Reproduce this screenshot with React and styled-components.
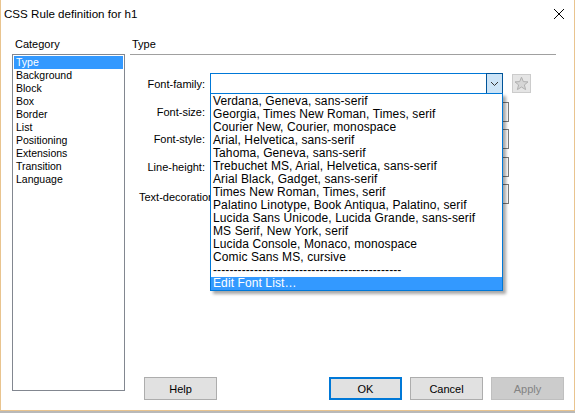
import React from "react";
import styled, { createGlobalStyle } from "styled-components";

const Global = createGlobalStyle`
  html, body { margin: 0; padding: 0; }
  body {
    width: 575px; height: 413px; overflow: hidden;
    background: #b9b9b9;
    font-family: "Liberation Sans", Arial, sans-serif;
    font-size: 11px; color: #000;
  }
`;

const Window = styled.div`
  box-sizing: border-box;
  width: 575px; height: 411px;
  background: #fff;
  border: 1px solid #e9c48f;
  border-top: none;
  display: flex; flex-direction: column;
`;

const TitleBar = styled.div`
  height: 30px; flex: none;
  display: flex; align-items: flex-start; justify-content: space-between;
  padding: 6px 9px 0 3px;
  box-sizing: border-box;
`;

const Title = styled.div`
  font-size: 11.6px; line-height: 15px;
`;

const Close = styled.div`
  width: 12px; height: 12px; margin-top: 2px;
  display: flex;
`;

const Content = styled.div`
  flex: 1; min-height: 0;
  display: grid; grid-template-columns: 113px 1fr; column-gap: 5px;
  padding: 0 10px 10px 11px;
`;

const Column = styled.div`
  display: flex; flex-direction: column; min-height: 0;
`;

const Heading = styled.div`
  line-height: 13px; margin-top: 8px; padding-left: ${p => p.$indent}px;
`;

const ListBox = styled.div`
  margin-top: 3px; height: 337px; box-sizing: border-box;
  border: 1px solid #828790;
  padding: 1px;
`;

const ListItem = styled.div`
  height: 13px; line-height: 13px; padding-left: 2px;
  font-size: 10.5px;
  background: ${p => (p.$selected ? "#3399ff" : "transparent")};
  color: ${p => (p.$selected ? "#fff" : "#000")};
`;

const Separator = styled.div`
  margin-top: 3px; height: 1px; background: #a0a0a0; width: 426px;
`;

const Form = styled.div`
  margin-top: 18px;
  display: flex; flex-direction: column;
`;

const Row = styled.div`
  display: grid; grid-template-columns: 80px 299px;
  align-items: center;
  margin-top: ${p => p.$top}px;
  height: ${p => p.$h}px;
`;

const Label = styled.div`
  text-align: ${p => (p.$left ? "left" : "right")};
  padding-right: 5px; padding-left: ${p => (p.$left ? 9 : 0)}px;
  white-space: nowrap; line-height: 13px;
  position: relative; top: ${p => p.$shift || 0}px;
`;

const Controls = styled.div`
  display: flex; align-items: center; gap: 9px;
  position: relative;
`;

const Combo = styled.div`
  position: relative; flex: none;
  width: 293px; height: 21px; box-sizing: border-box;
  border: 1px solid #0078d7;
  display: flex;
`;

const ComboField = styled.div` flex: 1; `;

const ComboButton = styled.div`
  width: 17px; margin: -1px -1px -1px 0;
  box-sizing: border-box;
  background: #cce4f7; border: 1px solid #005499;
  display: flex; align-items: center; justify-content: center;
`;

const StarButton = styled.div`
  flex: none;
  width: 19px; height: 19px; box-sizing: border-box;
  background: #e5e5e5; border: 1px solid #cccccc;
  display: flex; align-items: center; justify-content: center;
  margin-top: -1px;
`;

const SelectBox = styled.div`
  width: 299px; height: 20px; box-sizing: border-box;
  border: 1px solid #7a7a7a; background: #fff;
`;

const Dropdown = styled.div`
  position: absolute; left: -1px; top: 19px;
  width: 293px; box-sizing: border-box;
  border: 1px solid #0078d7; background: #fff;
  padding-top: 1px;
  box-shadow: 3px 3px 3px rgba(0,0,0,0.35);
  z-index: 5;
`;

const Option = styled.div`
  height: 13px; line-height: 13px;
  padding-left: 2px;
  font-size: 12px; letter-spacing: 0.1px;
  background: ${p => (p.$highlight ? "#3399ff" : "transparent")};
  color: ${p => (p.$highlight ? "#fff" : "#000")};
  white-space: nowrap; overflow: hidden;
`;

const Buttons = styled.div`
  margin-top: auto;
  display: flex; gap: 8px; padding-left: 14px;
`;

const Spacer = styled.div` flex: 1; `;

const Button = styled.div`
  width: 73px; height: 23px; box-sizing: border-box;
  display: flex; align-items: center; justify-content: center;
  background: ${p => (p.$disabled ? "#cccccc" : "#e1e1e1")};
  color: ${p => (p.$disabled ? "#838383" : "#000")};
  border: ${p => (p.$default ? "2px solid #0078d7" : p.$disabled ? "1px solid #bfbfbf" : "1px solid #adadad")};
  font-size: 11px;
`;

const categories = ["Type", "Background", "Block", "Box", "Border", "List", "Positioning", "Extensions", "Transition", "Language"];

const fonts = [
  "Verdana, Geneva, sans-serif",
  "Georgia, Times New Roman, Times, serif",
  "Courier New, Courier, monospace",
  "Arial, Helvetica, sans-serif",
  "Tahoma, Geneva, sans-serif",
  "Trebuchet MS, Arial, Helvetica, sans-serif",
  "Arial Black, Gadget, sans-serif",
  "Times New Roman, Times, serif",
  "Palatino Linotype, Book Antiqua, Palatino, serif",
  "Lucida Sans Unicode, Lucida Grande, sans-serif",
  "MS Serif, New York, serif",
  "Lucida Console, Monaco, monospace",
  "Comic Sans MS, cursive",
  "----------------------------------------------",
];

const otherRows = [
  { label: "Font-size:", top: 8 },
  { label: "Font-style:", top: 7 },
  { label: "Line-height:", top: 8 },
  { label: "Text-decoration:", top: 7, left: true, shift: 3 },
];

export default function App() {
  return (
    <>
      <Global />
      <Window>
        <TitleBar>
          <Title>CSS Rule definition for h1</Title>
          <Close>
            <svg width="12" height="12" viewBox="0 0 12 12">
              <path d="M1 1 L11 11 M11 1 L1 11" stroke="#000" strokeWidth="1" fill="none" />
            </svg>
          </Close>
        </TitleBar>
        <Content>
          <Column>
            <Heading $indent={3}>Category</Heading>
            <ListBox>
              {categories.map((c, i) => (
                <ListItem key={c} $selected={i === 0}>{c}</ListItem>
              ))}
            </ListBox>
          </Column>
          <Column>
            <Heading $indent={2}>Type</Heading>
            <Separator />
            <Form>
              <Row $top={0} $h={21}>
                <Label $shift={1}>Font-family:</Label>
                <Controls>
                  <Combo>
                    <ComboField />
                    <ComboButton>
                      <svg width="9" height="6" viewBox="0 0 9 6">
                        <path d="M1 1 L4.5 4.5 L8 1" stroke="#333" strokeWidth="1" fill="none" />
                      </svg>
                    </ComboButton>
                    <Dropdown>
                      {fonts.map(f => (
                        <Option key={f}>{f}</Option>
                      ))}
                      <Option $highlight>Edit Font List…</Option>
                    </Dropdown>
                  </Combo>
                  <StarButton>
                    <svg width="15" height="15" viewBox="0 0 15 15">
                      <path d="M7.5 1.2 L9.3 5.6 L14 5.9 L10.4 8.9 L11.6 13.6 L7.5 11 L3.4 13.6 L4.6 8.9 L1 5.9 L5.7 5.6 Z" fill="#d6d6d6" stroke="#b0b0b0" strokeWidth="1" strokeLinejoin="round" />
                    </svg>
                  </StarButton>
                </Controls>
              </Row>
              {otherRows.map(r => (
                <Row key={r.label} $top={r.top} $h={20}>
                  <Label $left={r.left} $shift={r.shift}>{r.label}</Label>
                  <Controls>
                    <SelectBox />
                  </Controls>
                </Row>
              ))}
            </Form>
            <Buttons>
              <Button>Help</Button>
              <Spacer />
              <Button $default>OK</Button>
              <Button>Cancel</Button>
              <Button $disabled>Apply</Button>
            </Buttons>
          </Column>
        </Content>
      </Window>
    </>
  );
}
